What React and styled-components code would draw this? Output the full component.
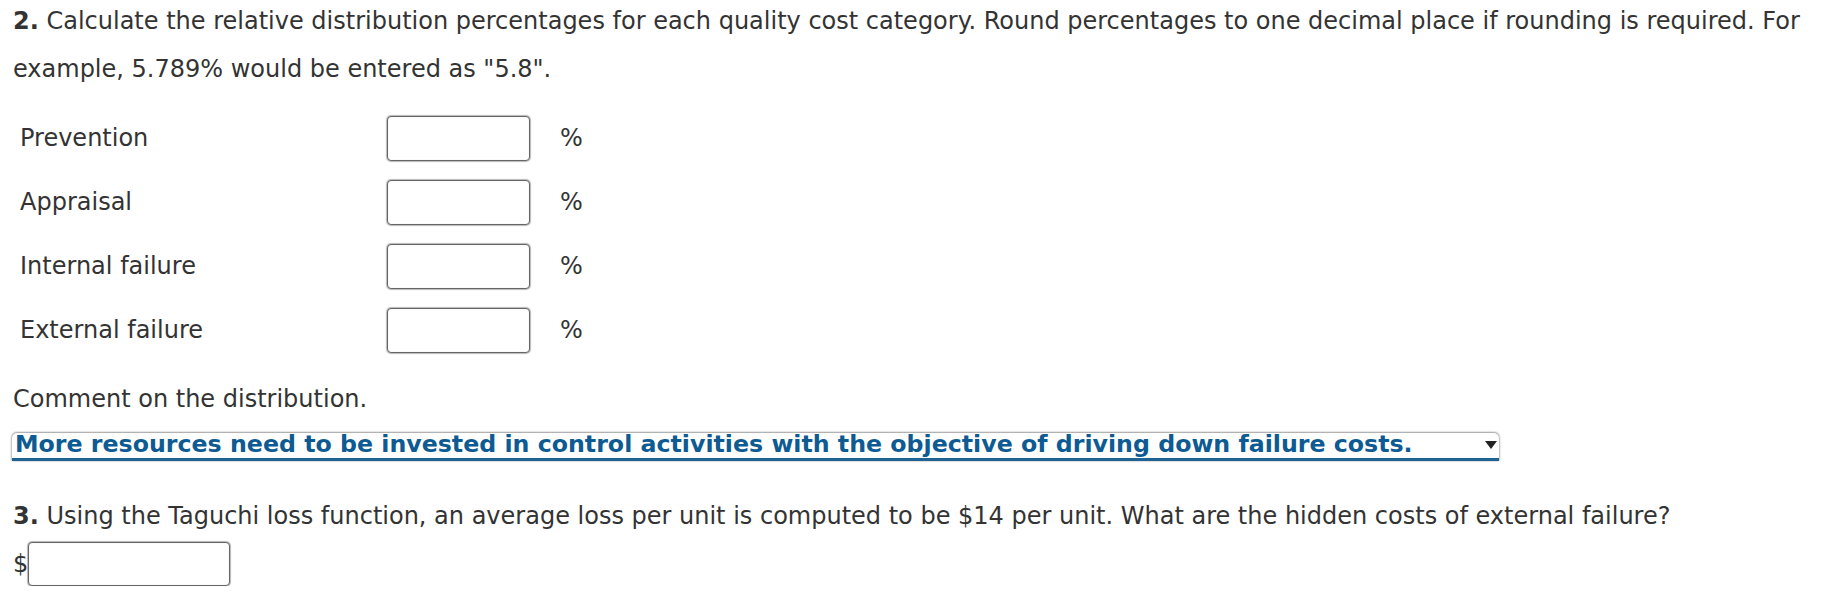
import React from 'react';
import styled, { createGlobalStyle } from 'styled-components';

const GlobalStyle = createGlobalStyle`
  body {
    margin: 0;
    background: #fff;
    font-family: Verdana, "DejaVu Sans", sans-serif;
    color: #333;
  }
`;

const Page = styled.div`
  padding: 0 13px;
  width: 1800px;
  font-size: 24px;
`;

const Question = styled.p`
  margin: ${(p) => p.$top || 0} 0 0 0;
  line-height: ${(p) => p.$lh || 'normal'};
`;

const Num = styled.b`
  font-weight: bold;
`;

const Rows = styled.div`
  margin-top: 13px;
  padding-left: 7px;
`;

const Row = styled.div`
  display: grid;
  grid-template-columns: 367px 173px auto;
  align-items: center;
  height: 64px;
`;

const Field = styled.input`
  box-sizing: border-box;
  width: ${(p) => p.$w || '143px'};
  height: ${(p) => p.$h || '45px'};
  border: 1px solid #666;
  border-radius: 4px;
  box-shadow: 0 0 1px 1px rgba(0, 0, 0, 0.28), inset 0 0 1px rgba(0, 0, 0, 0.2);
  background: #fff;
  margin: 0;
  font: inherit;
`;

const Comment = styled.div`
  margin-top: 23px;
`;

const Dropdown = styled.div`
  box-sizing: border-box;
  margin-top: 20px;
  margin-left: -1px;
  width: 1487px;
  height: 28px;
  display: flex;
  align-items: flex-start;
  justify-content: space-between;
  padding: 0 2px 0 3px;
  background: #fff;
  border-radius: 5px 5px 0 0;
  box-shadow: 0 -1px 2px rgba(0, 0, 0, 0.3), 1px 0 2px rgba(0, 0, 0, 0.2), -1px 0 2px rgba(0, 0, 0, 0.2);
  border-bottom: 3px solid #1f6394;
  color: #0d5b92;
  font-size: 23.7px;
  font-weight: bold;
  white-space: nowrap;
  line-height: 22px;
`;

const Arrow = styled.span`
  width: 0;
  height: 0;
  border-left: 6px solid transparent;
  border-right: 6px solid transparent;
  border-top: 8px solid #222;
  margin-top: 8px;
`;

const Answer = styled.div`
  margin-top: 12px;
  display: flex;
  align-items: center;
`;

const labels = ['Prevention', 'Appraisal', 'Internal failure', 'External failure'];

const App = () => {
  return (
    <Page>
      <GlobalStyle />
      <Question $lh="48px" $top="-3px">
        <Num>2.</Num> Calculate the relative distribution percentages for each quality cost category.
        Round percentages to one decimal place if rounding is required. For example, 5.789% would be
        entered as "5.8".
      </Question>
      <Rows>
        {labels.map((label) => (
          <Row key={label}>
            <span>{label}</span>
            <Field type="text" />
            <span>%</span>
          </Row>
        ))}
      </Rows>
      <Comment>Comment on the distribution.</Comment>
      <Dropdown>
        <span>More resources need to be invested in control activities with the objective of driving down failure costs.</span>
        <Arrow />
      </Dropdown>
      <Question $top="41px">
        <Num>3.</Num> Using the Taguchi loss function, an average loss per unit is computed to be $14 per
        unit. What are the hidden costs of external failure?
      </Question>
      <Answer>
        <span>$</span>
        <Field type="text" $w="202px" $h="44px" />
      </Answer>
    </Page>
  );
};

export default App;
